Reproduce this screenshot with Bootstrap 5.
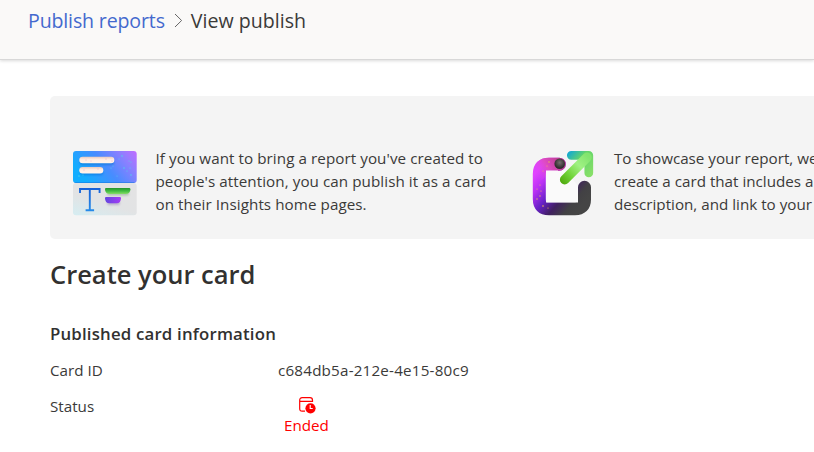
<!DOCTYPE html>
<html lang="en">
<head>
<meta charset="utf-8">
<meta name="viewport" content="width=device-width, initial-scale=1">
<title>View publish</title>
<link href="https://cdn.jsdelivr.net/npm/bootstrap@5.3.0/dist/css/bootstrap.min.css" rel="stylesheet">
<style>
body{font-family:"Open Sans","Noto Sans",sans-serif;font-size:15.2px;line-height:23px;color:#3b3a39;background:#fff;height:452px}
.topbar{height:60px;background:#faf9f8;border-bottom:1px solid #d8d8d8;box-shadow:0 1px 3px rgba(0,0,0,.15);padding-left:28px}
.crumbs{height:42px;font-size:19.6px;line-height:42px}
.crumbs a{color:#4469ce;letter-spacing:-.16px}
.crumbs svg{margin:0 8px 2px 9px}
.content{padding:36px 0 0 50px}
.intro{height:142.5px;background:#f4f4f4;border-radius:5px 0 0 5px;padding:51px 0 0 22px}
.tip{width:460px}
.tip p{margin-left:17.5px;letter-spacing:.07px}
.tip+.tip{width:282px}
.tip+.tip p{margin-left:16px;letter-spacing:0}
.tip svg{margin-top:3px}
h1{font-size:25.5px;line-height:34px;font-weight:600;margin:18px 0 0;color:#323130}
h2{font-size:16.8px;line-height:24px;font-weight:600;letter-spacing:.19px;margin:31px 0 0;color:#323130}
dl{padding-top:13px}
dt{width:228px}
.card-code{letter-spacing:.2px}
.status-row{padding-top:1.5px}
.state{color:#f00;margin-left:6px;line-height:20px}
.state svg{margin:1px 0 1px 2px}
</style>
<script src="https://cdn.jsdelivr.net/npm/bootstrap@5.3.0/dist/js/bootstrap.bundle.min.js"></script>
</head>
<body class="overflow-hidden">
<header class="topbar">
<nav class="crumbs d-flex align-items-center" aria-label="Breadcrumb">
<a href="#" class="text-decoration-none">Publish reports</a>
<svg width="9" height="15" viewBox="0 0 9 15" fill="none" stroke="#666" stroke-width="1"><path d="M1 1l6.600 6.500L1 14"/></svg>
<span>View publish</span>
</nav>
</header>
<main class="content">
<section class="intro d-flex align-items-start">
<div class="tip d-flex flex-shrink-0">
<svg class="flex-shrink-0" width="66" height="66" viewBox="0 0 66 66">
<defs>
<linearGradient id="sky" x1="0" y1=".4" x2="1" y2="0"><stop stop-color="#12adff"/><stop offset=".42" stop-color="#488cff"/><stop offset=".75" stop-color="#8c80ff"/><stop offset="1" stop-color="#c16cff"/></linearGradient>
<linearGradient id="paper" x1="0" y1="1" x2=".6" y2="0"><stop stop-color="#d5edf2"/><stop offset=".5" stop-color="#e2e3e4"/><stop offset="1" stop-color="#e3e3e4"/></linearGradient>
<linearGradient id="cream" x2="0" y2="1"><stop stop-color="#e8c8bd"/><stop offset=".4" stop-color="#ffece0"/><stop offset="1" stop-color="#fff4ed"/></linearGradient>
<linearGradient id="leaf" x2="0" y2="1"><stop stop-color="#24942e"/><stop offset=".5" stop-color="#40bd40"/><stop offset="1" stop-color="#87dc68"/></linearGradient>
<linearGradient id="violet"><stop stop-color="#6346df"/><stop offset="1" stop-color="#a43cf6"/></linearGradient>
<linearGradient id="ink" gradientUnits="userSpaceOnUse" x1="0" y1="38" x2="0" y2="61"><stop stop-color="#1760d7"/><stop offset="1" stop-color="#268be9"/></linearGradient>
<filter id="soft" x="-30%" y="-60%" width="160%" height="240%"><feGaussianBlur stdDeviation="1"/></filter>
</defs>
<rect x="1" y="33" width="63.700" height="32.300" rx="3" fill="url(#paper)"/>
<rect x="1" y="1" width="63.700" height="32" rx="3" fill="url(#sky)"/>
<path d="M2.500 32.500h60" stroke="#1875df" stroke-opacity=".5"/>
<g filter="url(#soft)" opacity=".6"><rect x="8" y="10" width="34" height="5" rx="2.500" fill="#0074d2"/><rect x="8" y="20" width="23" height="5" rx="2.500" fill="#0071d8"/><rect x="35" y="41.500" width="22" height="4" rx="2" fill="#8aab8e"/><rect x="35" y="51" width="13" height="4" rx="2" fill="#9c91ba"/></g>
<rect x="7.300" y="6.800" width="35" height="6.400" rx="3.200" fill="url(#cream)"/>
<rect x="7.300" y="17" width="24" height="6.400" rx="3.200" fill="url(#cream)"/>
<g fill="#d98ac0" opacity=".65"><circle cx="14" cy="10" r=".6"/><circle cx="19" cy="11" r=".5"/><circle cx="34" cy="9" r=".6"/><circle cx="40" cy="11" r=".6"/><circle cx="12" cy="20" r=".6"/><circle cx="26" cy="19" r=".5"/></g>
<g fill="#51d9e8" opacity=".8"><circle cx="50" cy="6" r=".8"/><circle cx="47" cy="9" r=".6"/><circle cx="57" cy="11" r=".6"/><circle cx="59" cy="12" r=".6"/><circle cx="41" cy="16" r=".6"/><circle cx="39" cy="18" r=".6"/><circle cx="52" cy="18" r=".8"/><circle cx="55" cy="21" r=".6"/><circle cx="58" cy="18" r=".6"/><circle cx="59" cy="25" r=".8"/><circle cx="45" cy="26" r=".5"/><circle cx="7" cy="26" r=".8"/><circle cx="11" cy="25" r=".6"/></g>
<path d="M8 43v-4h19.600v4M17.800 39v21.200M13.600 60.200h8.500" fill="none" stroke="url(#ink)" stroke-width="1.900"/>
<path d="M34 38h23.300Q58.400 38 58.400 39.200 58.400 44 53.500 44H38Q33 44 33 39.200 33 38 34 38z" fill="url(#leaf)"/>
<path d="M34 47h14Q49 47 49 48.200 49 53.300 44.500 53.300H37.500Q33 53.300 33 48.200 33 47 34 47z" fill="url(#violet)"/>
</svg>
<p class="mb-0 text-nowrap">If you want to bring a report you've created to<br>people's attention, you can publish it as a card<br>on their Insights home pages.</p>
</div>
<div class="tip d-flex flex-shrink-0">
<svg class="flex-shrink-0" width="66" height="66" viewBox="0 0 66 66">
<defs>
<linearGradient id="frame" gradientUnits="userSpaceOnUse" x1="3" y1="24" x2="46" y2="60"><stop stop-color="#e043ff"/><stop offset=".2" stop-color="#b931f3"/><stop offset=".43" stop-color="#6821c8"/><stop offset=".65" stop-color="#402060"/><stop offset=".85" stop-color="#424144"/><stop offset="1" stop-color="#454545"/></linearGradient>
<linearGradient id="pink" gradientUnits="userSpaceOnUse" x1="3" y1="24" x2="28" y2="10"><stop stop-color="#e043ff" stop-opacity="0"/><stop offset=".5" stop-color="#df4bc4"/><stop offset="1" stop-color="#bd3e91"/></linearGradient>
<radialGradient id="ball" cx=".5" cy=".4"><stop stop-color="#77706f"/><stop offset="1" stop-color="#302c2e"/></radialGradient>
<linearGradient id="stem" gradientUnits="userSpaceOnUse" x1="30" y1="33" x2="57" y2="7"><stop stop-color="#50aa0e"/><stop offset=".3" stop-color="#71d43a"/><stop offset=".65" stop-color="#a0f183"/><stop offset="1" stop-color="#82e46e"/></linearGradient>
<linearGradient id="head" gradientUnits="userSpaceOnUse" x1="36" y1="3" x2="59" y2="24"><stop stop-color="#14a9d2"/><stop offset=".4" stop-color="#61d46b"/><stop offset="1" stop-color="#86df68"/></linearGradient>
</defs>
<path d="M14 20.500h19l13 15v17H14z" fill="#fafafa"/>
<path d="M27.300 14.200H17Q7.300 14.200 7.300 24v25Q7.300 58.800 17 58.800h26Q52.500 58.800 52.500 49.500V37.300" fill="none" stroke="url(#frame)" stroke-width="13" stroke-linecap="round"/>
<path d="M27.300 14.200H17Q7.300 14.200 7.300 24" fill="none" stroke="url(#pink)" stroke-width="13" stroke-linecap="round"/>
<path d="M13.500 20.500h8v31.800H46V47h2v7.500H13.500z" fill="none"/>
<path d="M14 20.500h12v32H14zM26 35h20v17.500H26z" fill="#fafafa"/>
<circle cx="27.700" cy="13.700" r="5.300" fill="url(#ball)"/>
<path d="M39.300 5.300H56.800V23" fill="none" stroke="url(#head)" stroke-width="8.700" stroke-linecap="round" stroke-linejoin="round"/>
<path d="M32.700 29.700L55 7.300" stroke="url(#stem)" stroke-width="9.600" stroke-linecap="round"/>
<g fill="#f5b758"><circle cx="17" cy="12" r=".7"/><circle cx="15" cy="16" r=".5"/><circle cx="11" cy="21" r=".5"/><circle cx="8" cy="35" r=".6"/><circle cx="5" cy="39" r=".6"/><circle cx="8" cy="46" r=".7"/><circle cx="9" cy="41" r=".6"/><circle cx="5" cy="49" r=".7"/><circle cx="11" cy="56" r=".8"/><circle cx="16" cy="58" r=".6"/></g>
</svg>
<p class="mb-0 text-nowrap">To showcase your report, we<br>create a card that includes a<br>description, and link to your</p>
</div>
</section>
<h1>Create your card</h1>
<h2>Published card information</h2>
<dl class="mb-0">
<div class="d-flex mb-2 pb-1"><dt class="fw-normal">Card ID</dt><dd class="mb-0 card-code">c684db5a-212e-4e15-80c9</dd></div>
<div class="d-flex status-row"><dt class="fw-normal">Status</dt><dd class="mb-0 state d-flex flex-column align-items-center">
<svg width="18" height="18" viewBox="0 0 18 18"><path d="M7 15.200H4.200Q1.700 15.200 1.700 12.700V4.200Q1.700 1.700 4.200 1.700H12Q14.500 1.700 14.500 4.200V6M1.700 5.400h12.800" fill="none" stroke="red" stroke-width="1.200"/><circle cx="12.500" cy="12.300" r="5.100" fill="red"/><path d="M12.200 9v3.500h2.500" fill="none" stroke="#fff" stroke-width="1.100"/></svg>
<span>Ended</span></dd></div>
</dl>
</main>
</body>
</html>
